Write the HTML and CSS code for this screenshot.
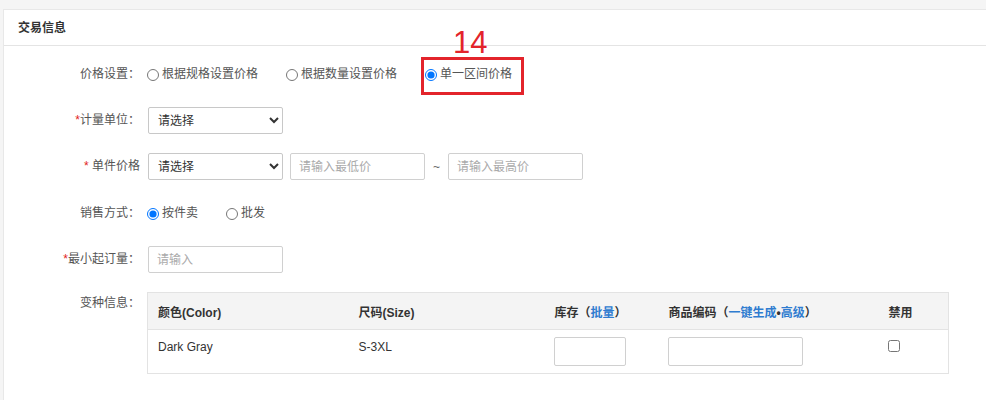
FILE: index.html
```html
<!DOCTYPE html>
<html lang="zh-CN">
<head>
  <meta charset="UTF-8">
  <title>交易信息</title>
  <link rel="stylesheet" href="styles.css">
</head>
<body>
  <div class="panel">
    <div class="panel-head">交易信息</div>

    <div class="panel-body">
      <!-- 价格设置 -->
      <div class="form-row">
        <label class="form-label">价格设置：</label>
        <div class="form-field">
          <label class="option"><input type="radio" name="price-mode">根据规格设置价格</label>
          <label class="option"><input type="radio" name="price-mode">根据数量设置价格</label>
          <label class="option marked">
            <input type="radio" name="price-mode" checked>单一区间价格
            <span class="mark-box"></span>
            <span class="mark-num">14</span>
          </label>
        </div>
      </div>

      <div class="form-row">
        <label class="form-label"><i class="req">*</i>计量单位：</label>
        <div class="form-field">
          <select class="ctl">
            <option>请选择</option>
          </select>
        </div>
      </div>

      <div class="form-row wide">
        <label class="form-label"><i class="req">*</i> 单件价格</label>
        <div class="form-field">
          <select class="ctl">
            <option>请选择</option>
          </select>
          <input class="ctl price-input" type="text" placeholder="请输入最低价">
          <span class="tilde">~</span>
          <input class="ctl" type="text" placeholder="请输入最高价">
        </div>
      </div>

      <div class="form-row">
        <label class="form-label">销售方式：</label>
        <div class="form-field">
          <label class="option"><input type="radio" name="sale-mode" checked>按件卖</label>
          <label class="option"><input type="radio" name="sale-mode">批发</label>
        </div>
      </div>

      <div class="form-row">
        <label class="form-label"><i class="req">*</i>最小起订量：</label>
        <div class="form-field">
          <input class="ctl" type="text" placeholder="请输入">
        </div>
      </div>

      <!-- 变种信息 -->
      <div class="form-row top">
        <label class="form-label">变种信息：</label>
        <div class="form-field">
          <table class="sku-table">
            <colgroup>
              <col style="width: 201px">
              <col style="width: 196px">
              <col style="width: 114px">
              <col style="width: 220px">
              <col>
            </colgroup>
            <thead>
              <tr>
                <th>颜色(Color)</th>
                <th>尺码(Size)</th>
                <th>库存（<a href="#">批量</a>）</th>
                <th>商品编码（<a href="#">一键生成</a>•<a href="#">高级</a>）</th>
                <th>禁用</th>
              </tr>
            </thead>
            <tbody>
              <tr>
                <td>Dark Gray</td>
                <td>S-3XL</td>
                <td><input class="cell-input stock" type="text"></td>
                <td><input class="cell-input code" type="text"></td>
                <td><input class="cell-check" type="checkbox"></td>
              </tr>
            </tbody>
          </table>
        </div>
      </div>
    </div>
  </div>
</body>
</html>
```

FILE: styles.css
```css
* {
  box-sizing: border-box;
}
body {
  margin: 0;
  background-color: #f5f5f5;
  font-family: "Liberation Sans", "Noto Sans CJK SC", sans-serif;
  font-size: 12px;
  color: #333;
  overflow: hidden;
}
.panel {
  margin: 9px -20px 0 3px;
  min-height: 400px;
  background-color: #fff;
  border: 1px solid #e8e8e8;
}
.panel-head {
  height: 36px;
  line-height: 36px;
  padding-left: 14px;
  font-weight: bold;
  color: #333;
  border-bottom: 1px solid #e4e4e4;
}
.panel-body {
  padding-top: 15px;
}
.form-row {
  display: flex;
  align-items: center;
  min-height: 27px;
  margin-bottom: 19px;
}
.form-row.wide {
  margin-bottom: 20px;
}
.form-row.top {
  align-items: flex-start;
}
.form-label {
  width: 136px;
  margin-right: 8px;
  text-align: right;
  color: #555;
  line-height: 27px;
  white-space: nowrap;
}
.form-row.top .form-label {
  line-height: 22px;
}
.req {
  font-style: normal;
  color: #e2231a;
}
.form-field {
  display: flex;
  align-items: center;
}
/* radio options */
.option {
  display: flex;
  align-items: center;
  margin-right: 29px;
  color: #555;
  line-height: 27px;
  cursor: pointer;
}
.option input {
  width: 12px;
  height: 12px;
  margin: 0 3px 0 -1px;
}
.marked {
  position: relative;
}
.mark-box {
  position: absolute;
  left: -5px;
  top: -4px;
  right: -12px;
  bottom: -7px;
  border: 3px solid #e3242b;
}
.mark-num {
  position: absolute;
  left: 27px;
  top: -34px;
  font-family: "Liberation Sans", sans-serif;
  font-size: 31px;
  line-height: 31px;
  color: #e3242b;
}
/* inputs & selects */
.ctl {
  width: 135px;
  height: 27px;
  padding: 0 8px;
  border: 1px solid #d0d0d0;
  border-radius: 2px;
  background-color: #fff;
  font-family: inherit;
  font-size: 12px;
  color: #333;
  outline: none;
}
select.ctl {
  padding-left: 5px;
  border-color: #c8c8c8;
}
.ctl::placeholder {
  color: #aaa;
}
.price-input {
  margin-left: 7px;
}
.tilde {
  width: 23px;
  text-align: center;
  color: #666;
}
/* variant table */
.sku-table {
  width: 802px;
  table-layout: fixed;
  border-collapse: collapse;
  border: 1px solid #e3e3e3;
  margin-left: -1px;
}
.sku-table th {
  height: 37px;
  padding: 0 10px;
  text-align: left;
  font-weight: bold;
  color: #333;
  background-color: #f4f4f4;
  border-bottom: 1px solid #e3e3e3;
  white-space: nowrap;
}
.sku-table th a {
  color: #2f7cd0;
  text-decoration: none;
}
.sku-table td {
  height: 44px;
  padding: 7px 10px 0;
  vertical-align: top;
  line-height: 20px;
  color: #333;
}
.cell-input {
  display: block;
  height: 29px;
  margin-left: -1px;
  border: 1px solid #d0d0d0;
  border-radius: 2px;
  outline: none;
}
.cell-input.stock {
  width: 72px;
}
.cell-input.code {
  width: 135px;
}
.cell-check {
  display: block;
  width: 12px;
  height: 12px;
  margin: 3px 0 0 -1px;
}
```
